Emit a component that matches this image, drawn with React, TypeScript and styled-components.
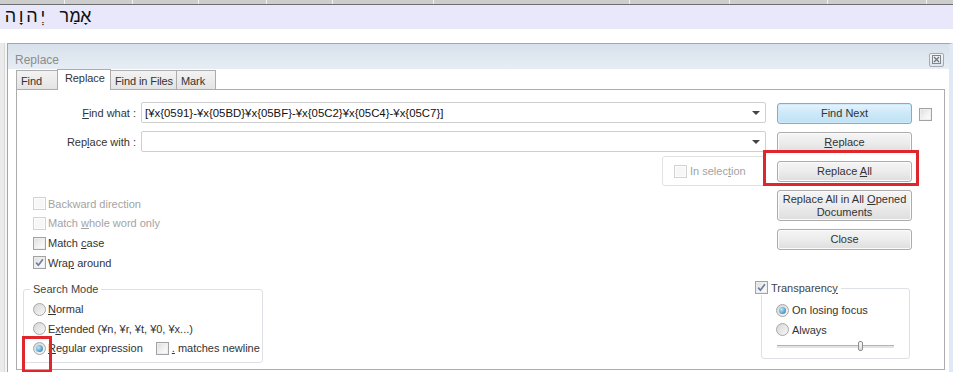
import React from 'react';
import styled, { createGlobalStyle } from 'styled-components';

const GlobalStyle = createGlobalStyle`
  html, body { margin: 0; padding: 0; background: #fff; }
  body {
    font-family: "Liberation Sans", Arial, sans-serif;
    font-size: 11px;
    color: #222;
  }
  u { text-underline-offset: 1px; }
`;

const Screen = styled.div`
  width: 953px;
  height: 372px;
  overflow: hidden;
  display: flex;
  flex-direction: column;
`;

const HeaderStrip = styled.div`
  display: flex;
  height: 4px;
  background: #cdcdcd;
  border-bottom: 1px solid #6d6d6d;
`;

const HeaderCell = styled.div<{ $w: number }>`
  width: ${(p) => p.$w}px;
  flex-shrink: 0;
  border-right: 1px solid #f2f2f2;
`;

const EditorLine = styled.div`
  height: 24px;
  background: #e8e8fa;
  padding-left: 5px;
  line-height: 24px;
`;

const Hebrew = styled.span`
  display: inline-block;
  font-family: "Liberation Mono", "DejaVu Sans Mono", monospace;
  font-size: 18px;
  color: #111;
`;

const EditorGap = styled.div`
  height: 14px;
  background: #fff;
`;

const DialogArea = styled.div`
  flex: 1;
  display: flex;
  min-height: 0;
`;

const Gutter = styled.div`
  width: 7px;
  flex-shrink: 0;
  background: linear-gradient(to right, #ebebeb 0 4px, #d9d9d9 4px 5px, #f6f6f6 5px);
`;

const Dialog = styled.div`
  flex: 1;
  display: flex;
  flex-direction: column;
  border-top: 1px solid #a6a6a6;
  border-left: 1px solid #a6a6a6;
  border-right: 4px solid #dfe8f4;
  background: #fff;
`;

const TitleBar = styled.div`
  height: 25px;
  box-sizing: border-box;
  padding: 6px 5px 0 7px;
  display: flex;
  align-items: center;
  justify-content: space-between;
  background: linear-gradient(to bottom, #d7e1eb, #e7edf4);
`;

const TitleText = styled.span`
  font-size: 12px;
  color: #8c8c8c;
`;

const TitleClose = styled.div`
  width: 15px;
  height: 14px;
  box-sizing: border-box;
  border: 1px solid #a4aab2;
  border-radius: 2px;
  background: linear-gradient(#f4f6f9, #dfe4ea);
  display: grid;
  place-items: center;
`;

const Client = styled.div`
  flex: 1;
  display: flex;
  flex-direction: column;
  padding: 0 4px 2px 8px;
  min-height: 0;
`;

const TabRow = styled.div`
  display: flex;
  align-items: flex-end;
  height: 20px;
`;

const Tab = styled.div<{ $w: number; $active?: boolean }>`
  position: relative;
  z-index: ${(p) => (p.$active ? 1 : 0)};
  width: ${(p) => p.$w}px;
  height: ${(p) => (p.$active ? 21 : 19)}px;
  margin-bottom: ${(p) => (p.$active ? -1 : 0)}px;
  margin-right: -1px;
  box-sizing: border-box;
  padding: ${(p) => (p.$active ? '2px 0 0 7px' : '4px 0 0 4px')};
  border: 1px solid #acacac;
  border-bottom: none;
  background: ${(p) => (p.$active ? '#fff' : 'linear-gradient(#f3f3f3, #e4e4e4)')};
  color: #333;
  font-size: 11px;
  letter-spacing: -0.1px;
  white-space: nowrap;
`;

const Panel = styled.div`
  flex: 1;
  border: 1px solid #acacac;
  background: #fff;
  padding: 12px 0 0 6px;
  display: flex;
  flex-direction: column;
`;

const TopSection = styled.div`
  display: flex;
  align-items: flex-start;
  padding-left: 10px;
`;

const FieldsArea = styled.div`
  width: 733px;
  display: flex;
  flex-direction: column;
`;

const FieldRow = styled.div`
  display: grid;
  grid-template-columns: 103px 625px;
  column-gap: 5px;
  align-items: center;
  & + & { margin-top: 8px; }
`;

const FieldLabel = styled.span`
  text-align: right;
  color: #333;
`;

const Combo = styled.div`
  height: 21px;
  box-sizing: border-box;
  border: 1px solid #cfcfcf;
  border-radius: 2px;
  display: flex;
  align-items: center;
  padding: 0 5px 0 3px;
  background: #fff;
`;

const ComboText = styled.span`
  flex: 1;
  font-size: 11.4px;
  color: #111;
  white-space: nowrap;
  overflow: hidden;
`;

const ComboArrow = styled.span`
  width: 0;
  height: 0;
  border-left: 4px solid transparent;
  border-right: 4px solid transparent;
  border-top: 4px solid #444;
`;

const InSelectionBox = styled.div`
  align-self: flex-end;
  margin-top: 4px;
  width: 104px;
  height: 30px;
  box-sizing: border-box;
  border: 1px solid #e0e3e6;
  border-radius: 3px;
  padding-left: 11px;
  display: flex;
  align-items: center;
`;

const OptionList = styled.div`
  margin-top: 8px;
  display: flex;
  flex-direction: column;
`;

const OptionRow = styled.div<{ $muted?: boolean; $h?: number; $gap?: number }>`
  display: flex;
  align-items: center;
  gap: ${(p) => p.$gap ?? 2}px;
  height: ${(p) => p.$h ?? 19.67}px;
  color: ${(p) => (p.$muted ? '#a3a3a3' : '#333')};
  white-space: nowrap;
`;

const ButtonColumn = styled.div`
  margin-left: 11px;
  margin-top: 1px;
  width: 135px;
  display: flex;
  flex-direction: column;
  gap: 8px;
`;

const Button = styled.div<{ $primary?: boolean; $tall?: boolean }>`
  height: ${(p) => (p.$tall ? 31 : 21)}px;
  box-sizing: border-box;
  border-radius: 3px;
  border: 1px solid ${(p) => (p.$primary ? '#6fb3dc' : '#acacac')};
  background: ${(p) =>
    p.$primary
      ? 'linear-gradient(#e6f4fc 0%, #cbe8f8 50%, #bfe2f6 100%)'
      : 'linear-gradient(#f5f5f5 0%, #ececec 50%, #dedede 100%)'};
  box-shadow: ${(p) => (p.$primary ? '0 0 0 1px #cfe9f8 inset' : 'inset 0 0 0 1px #fbfbfb')};
  display: flex;
  align-items: center;
  justify-content: center;
  text-align: center;
  line-height: 13px;
  color: #333;
`;

const Marked = styled.div`
  position: relative;
  display: flex;
  flex-direction: column;
`;

const RedFrame = styled.div<{ $t: number; $r: number; $b: number; $l: number }>`
  position: absolute;
  top: ${(p) => p.$t}px;
  right: ${(p) => p.$r}px;
  bottom: ${(p) => p.$b}px;
  left: ${(p) => p.$l}px;
  border: 3px solid #e0262d;
  pointer-events: none;
`;

const SideCheck = styled.div`
  margin-left: 7px;
  margin-top: 6px;
`;

const BottomSection = styled.div`
  display: flex;
  align-items: flex-start;
  margin-top: 16px;
  padding-right: 34px;
`;

const GroupBox = styled.div<{ $w: number; $h: number; $right?: boolean }>`
  width: ${(p) => p.$w}px;
  height: ${(p) => p.$h}px;
  box-sizing: border-box;
  border: 1px solid #dde1e5;
  border-radius: 3px;
  margin-left: ${(p) => (p.$right ? 'auto' : '0')};
  margin-top: ${(p) => (p.$right ? -1 : 0)}px;
`;

const Caption = styled.div<{ $offset: number }>`
  display: flex;
  align-items: center;
  gap: 3px;
  width: fit-content;
  height: 14px;
  margin: -8px 0 0 ${(p) => p.$offset}px;
  padding: 0 3px 0 ${(p) => (p.$offset > 0 ? 3 : 0)}px;
  background: #fff;
  color: #444;
  white-space: nowrap;
`;

const GroupBody = styled.div<{ $padLeft: number; $padTop: number }>`
  padding: ${(p) => p.$padTop}px 0 0 ${(p) => p.$padLeft}px;
  display: flex;
  flex-direction: column;
`;

const CheckSquare = styled.span<{ $disabled?: boolean }>`
  width: 13px;
  height: 13px;
  flex-shrink: 0;
  box-sizing: border-box;
  border: 1px solid ${(p) => (p.$disabled ? '#d3d3d3' : '#a2a2a2')};
  background: ${(p) =>
    p.$disabled ? '#f7f7f7' : 'linear-gradient(135deg, #dcdcdc 0%, #f4f4f4 60%, #fdfdfd 100%)'};
  box-shadow: inset 0 0 0 1px ${(p) => (p.$disabled ? '#fcfcfc' : '#eeeeee')};
  display: grid;
  place-items: center;
`;

const RadioCircle = styled.span<{ $checked?: boolean }>`
  width: 13px;
  height: 13px;
  flex-shrink: 0;
  box-sizing: border-box;
  border-radius: 50%;
  border: 1px solid #a6a6a6;
  background: linear-gradient(135deg, #d6d6d6, #f8f8f8);
  display: grid;
  place-items: center;
  &::after {
    content: '';
    display: ${(p) => (p.$checked ? 'block' : 'none')};
    width: 7px;
    height: 7px;
    border-radius: 50%;
    background: radial-gradient(circle at 35% 35%, #bfe6f8 0%, #5fa9d3 55%, #2b6f9e 100%);
  }
`;

const SliderTrack = styled.div`
  position: relative;
  margin: 1px 0 0 1px;
  width: 117px;
  height: 10px;
  &::before {
    content: '';
    position: absolute;
    left: 0;
    right: 0;
    top: 4px;
    height: 2px;
    background: #e4e4e4;
    border-top: 1px solid #b3b3b3;
  }
`;

const SliderThumb = styled.div`
  position: absolute;
  left: 81px;
  top: 0;
  width: 5px;
  height: 10px;
  box-sizing: border-box;
  border: 1px solid #8d8d8d;
  border-radius: 2px;
  background: linear-gradient(#fafafa, #dcdcdc);
`;

const CheckBox = ({ checked, disabled }: { checked?: boolean; disabled?: boolean }) => (
  <CheckSquare $disabled={disabled}>
    {checked && (
      <svg width="9" height="9" viewBox="0 0 9 9">
        <path d="M1.2 4.6 L3.4 7.2 L7.9 1.3" stroke="#6b7fa3" strokeWidth="1.7" fill="none" />
      </svg>
    )}
  </CheckSquare>
);

const headerCells = [64, 67, 65, 67, 65, 100, 195, 99, 97, 98, 40];

export default function App() {
  return (
    <>
      <GlobalStyle />
      <Screen>
        <HeaderStrip>
          {headerCells.map((w, i) => (
            <HeaderCell key={i} $w={w} />
          ))}
        </HeaderStrip>
        <EditorLine>
          <Hebrew dir="rtl">אָמַר יְהוָה</Hebrew>
        </EditorLine>
        <EditorGap />
        <DialogArea>
          <Gutter />
          <Dialog>
            <TitleBar>
              <TitleText>Replace</TitleText>
              <TitleClose>
                <svg width="9" height="9" viewBox="0 0 9 9">
                  <rect x="0.5" y="0.5" width="8" height="8" fill="none" stroke="#7d858e" />
                  <path d="M2 2 L7 7 M7 2 L2 7" stroke="#6d747c" strokeWidth="1.2" />
                </svg>
              </TitleClose>
            </TitleBar>
            <Client>
              <TabRow>
                <Tab $w={42}>Find</Tab>
                <Tab $w={54} $active>Replace</Tab>
                <Tab $w={67}>Find in Files</Tab>
                <Tab $w={40}>Mark</Tab>
              </TabRow>
              <Panel>
                <TopSection>
                  <FieldsArea>
                    <FieldRow>
                      <FieldLabel>
                        <u>F</u>ind what :
                      </FieldLabel>
                      <Combo>
                        <ComboText>[¥x{'{0591}'}-¥x{'{05BD}'}¥x{'{05BF}'}-¥x{'{05C2}'}¥x{'{05C4}'}-¥x{'{05C7}'}]</ComboText>
                        <ComboArrow />
                      </Combo>
                    </FieldRow>
                    <FieldRow>
                      <FieldLabel>
                        Rep<u>l</u>ace with :
                      </FieldLabel>
                      <Combo>
                        <ComboText />
                        <ComboArrow />
                      </Combo>
                    </FieldRow>
                    <InSelectionBox>
                      <OptionRow $muted $gap={3}>
                        <CheckBox disabled />
                        <span>
                          In selec<u>t</u>ion
                        </span>
                      </OptionRow>
                    </InSelectionBox>
                    <OptionList>
                      <OptionRow $muted>
                        <CheckBox disabled />
                        <span>Backward direction</span>
                      </OptionRow>
                      <OptionRow $muted>
                        <CheckBox disabled />
                        <span>
                          Match <u>w</u>hole word only
                        </span>
                      </OptionRow>
                      <OptionRow>
                        <CheckBox />
                        <span>
                          Match <u>c</u>ase
                        </span>
                      </OptionRow>
                      <OptionRow>
                        <CheckBox checked />
                        <span>
                          Wra<u>p</u> around
                        </span>
                      </OptionRow>
                    </OptionList>
                  </FieldsArea>
                  <ButtonColumn>
                    <Button $primary>Find Next</Button>
                    <Button>
                      <span>
                        <u>R</u>eplace
                      </span>
                    </Button>
                    <Marked>
                      <Button>
                        <span>
                          Replace <u>A</u>ll
                        </span>
                      </Button>
                      <RedFrame $t={-11} $r={-7} $b={-4} $l={-14} />
                    </Marked>
                    <Button $tall>
                      <span>
                        Replace All in All <u>O</u>pened
                        <br />
                        Documents
                      </span>
                    </Button>
                    <Button>Close</Button>
                  </ButtonColumn>
                  <SideCheck>
                    <CheckBox />
                  </SideCheck>
                </TopSection>
                <BottomSection>
                  <GroupBox $w={240} $h={74}>
                    <Caption $offset={6}>Search Mode</Caption>
                    <GroupBody $padLeft={9} $padTop={4}>
                      <OptionRow $h={19.5}>
                        <RadioCircle />
                        <span>
                          <u>N</u>ormal
                        </span>
                      </OptionRow>
                      <OptionRow $h={19.5}>
                        <RadioCircle />
                        <span>
                          E<u>x</u>tended (¥n, ¥r, ¥t, ¥0, ¥x...)
                        </span>
                      </OptionRow>
                      <OptionRow $h={19.5}>
                        <Marked>
                          <RadioCircle $checked />
                          <RedFrame $t={-6} $r={-6} $b={-18} $l={-11} />
                        </Marked>
                        <span>
                          <u>R</u>egular expression
                        </span>
                        <OptionRow $gap={3} style={{ marginLeft: 11 }}>
                          <CheckBox />
                          <span>
                            <u>.</u> matches newline
                          </span>
                        </OptionRow>
                      </OptionRow>
                    </GroupBody>
                  </GroupBox>
                  <GroupBox $w={149} $h={71} $right>
                    <Caption $offset={-7}>
                      <CheckBox checked />
                      <span>
                        Transparenc<u>y</u>
                      </span>
                    </Caption>
                    <GroupBody $padLeft={14} $padTop={6}>
                      <OptionRow $h={19.5} $gap={3}>
                        <RadioCircle $checked />
                        <span>On losing focus</span>
                      </OptionRow>
                      <OptionRow $h={19.5} $gap={3}>
                        <RadioCircle />
                        <span>Always</span>
                      </OptionRow>
                      <SliderTrack>
                        <SliderThumb />
                      </SliderTrack>
                    </GroupBody>
                  </GroupBox>
                </BottomSection>
              </Panel>
            </Client>
          </Dialog>
        </DialogArea>
      </Screen>
    </>
  );
}
